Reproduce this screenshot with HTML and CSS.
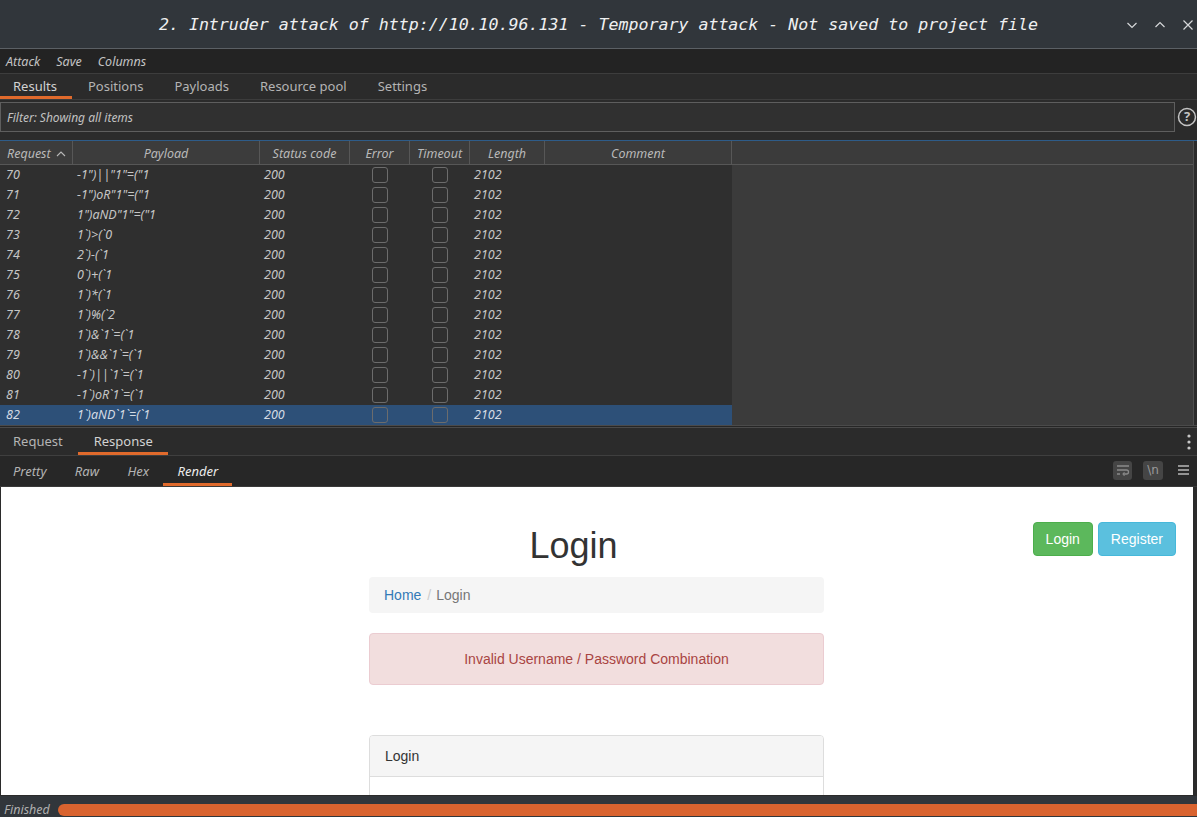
FILE: index.html
```html
<!DOCTYPE html>
<html>
<head>
<meta charset="utf-8">
<link rel="stylesheet" href="styles.css">
</head>
<body>
<div class="app">
  <header class="titlebar">
    <div></div>
    <div class="title">2. Intruder attack of http://10.10.96.131 - Temporary attack - Not saved to project file</div>
    <div class="winbtns">
      <svg width="12" height="12" viewBox="0 0 12 12"><path d="M1.5 4 L6 8.5 L10.5 4" fill="none" stroke="#d6d8da" stroke-width="1.2"/></svg>
      <svg width="12" height="12" viewBox="0 0 12 12"><path d="M1.5 8 L6 3.5 L10.5 8" fill="none" stroke="#d6d8da" stroke-width="1.2"/></svg>
      <svg width="12" height="12" viewBox="0 0 12 12"><path d="M1.5 1.5 L10.5 10.5 M10.5 1.5 L1.5 10.5" fill="none" stroke="#d6d8da" stroke-width="1.2"/></svg>
    </div>
  </header>

  <nav class="menubar">
    <span>Attack</span><span>Save</span><span>Columns</span>
  </nav>

  <nav class="tabs maintabs">
    <span class="tab active">Results</span>
    <span class="tab">Positions</span>
    <span class="tab">Payloads</span>
    <span class="tab">Resource pool</span>
    <span class="tab">Settings</span>
  </nav>

  <div class="filter-row">
    <div class="filter">Filter: Showing all items</div>
    <svg class="help" width="20" height="20" viewBox="0 0 20 20"><circle cx="10" cy="10" r="8.5" fill="none" stroke="#c4c4c4" stroke-width="1.5"/><text x="10" y="14.5" text-anchor="middle" font-family="Noto Sans, sans-serif" font-size="13" font-weight="bold" fill="#c4c4c4">?</text></svg>
  </div>

  <div class="table-wrap">
    <div class="table">
      <div class="row head">
        <div class="c c-req">Request <svg width="10" height="8" viewBox="0 0 10 8"><path d="M1 6 L5 2 L9 6" fill="none" stroke="#b8b8b8" stroke-width="1.1"/></svg></div>
        <div class="c center">Payload</div>
        <div class="c center">Status code</div>
        <div class="c center">Error</div>
        <div class="c center">Timeout</div>
        <div class="c center">Length</div>
        <div class="c center">Comment</div>
        <div class="c fill"></div>
      </div>
      <div class="row"><div class="c">70</div><div class="c">-1")||"1"=("1</div><div class="c">200</div><div class="c cb"><i></i></div><div class="c cb"><i></i></div><div class="c">2102</div><div class="c"></div><div class="c fill"></div></div>
      <div class="row"><div class="c">71</div><div class="c">-1")oR"1"=("1</div><div class="c">200</div><div class="c cb"><i></i></div><div class="c cb"><i></i></div><div class="c">2102</div><div class="c"></div><div class="c fill"></div></div>
      <div class="row"><div class="c">72</div><div class="c">1")aND"1"=("1</div><div class="c">200</div><div class="c cb"><i></i></div><div class="c cb"><i></i></div><div class="c">2102</div><div class="c"></div><div class="c fill"></div></div>
      <div class="row"><div class="c">73</div><div class="c">1`)&gt;(`0</div><div class="c">200</div><div class="c cb"><i></i></div><div class="c cb"><i></i></div><div class="c">2102</div><div class="c"></div><div class="c fill"></div></div>
      <div class="row"><div class="c">74</div><div class="c">2`)-(`1</div><div class="c">200</div><div class="c cb"><i></i></div><div class="c cb"><i></i></div><div class="c">2102</div><div class="c"></div><div class="c fill"></div></div>
      <div class="row"><div class="c">75</div><div class="c">0`)+(`1</div><div class="c">200</div><div class="c cb"><i></i></div><div class="c cb"><i></i></div><div class="c">2102</div><div class="c"></div><div class="c fill"></div></div>
      <div class="row"><div class="c">76</div><div class="c">1`)*(`1</div><div class="c">200</div><div class="c cb"><i></i></div><div class="c cb"><i></i></div><div class="c">2102</div><div class="c"></div><div class="c fill"></div></div>
      <div class="row"><div class="c">77</div><div class="c">1`)%(`2</div><div class="c">200</div><div class="c cb"><i></i></div><div class="c cb"><i></i></div><div class="c">2102</div><div class="c"></div><div class="c fill"></div></div>
      <div class="row"><div class="c">78</div><div class="c">1`)&amp;`1`=(`1</div><div class="c">200</div><div class="c cb"><i></i></div><div class="c cb"><i></i></div><div class="c">2102</div><div class="c"></div><div class="c fill"></div></div>
      <div class="row"><div class="c">79</div><div class="c">1`)&amp;&amp;`1`=(`1</div><div class="c">200</div><div class="c cb"><i></i></div><div class="c cb"><i></i></div><div class="c">2102</div><div class="c"></div><div class="c fill"></div></div>
      <div class="row"><div class="c">80</div><div class="c">-1`)||`1`=(`1</div><div class="c">200</div><div class="c cb"><i></i></div><div class="c cb"><i></i></div><div class="c">2102</div><div class="c"></div><div class="c fill"></div></div>
      <div class="row"><div class="c">81</div><div class="c">-1`)oR`1`=(`1</div><div class="c">200</div><div class="c cb"><i></i></div><div class="c cb"><i></i></div><div class="c">2102</div><div class="c"></div><div class="c fill"></div></div>
      <div class="row selected"><div class="c">82</div><div class="c">1`)aND`1`=(`1</div><div class="c">200</div><div class="c cb"><i></i></div><div class="c cb"><i></i></div><div class="c">2102</div><div class="c"></div><div class="c fill"></div></div>
    </div>
    <div class="scrollbar"></div>
  </div>

  <div class="splitter"></div>

  <nav class="tabs rrtabs">
    <span class="tab">Request</span>
    <span class="tab active">Response</span>
    <span class="spacer"></span>
    <svg class="kebab" width="4" height="16" viewBox="0 0 4 16"><circle cx="2" cy="2" r="1.6" fill="#c8c8c8"/><circle cx="2" cy="8" r="1.6" fill="#c8c8c8"/><circle cx="2" cy="14" r="1.6" fill="#c8c8c8"/></svg>
  </nav>

  <nav class="tabs subtabs">
    <span class="tab">Pretty</span>
    <span class="tab">Raw</span>
    <span class="tab">Hex</span>
    <span class="tab active">Render</span>
    <span class="spacer"></span>
    <span class="iconbtn"><svg width="14" height="12" viewBox="0 0 14 12"><path d="M1 2 H13 M1 6 H10.5 A2 2 0 0 1 10.5 10 H7.5 M1 10 H4" fill="none" stroke="#8a8a8a" stroke-width="1.3"/><path d="M8.5 8.3 L7 10 L8.5 11.7" fill="none" stroke="#8a8a8a" stroke-width="1.1"/></svg></span>
    <span class="iconbtn nl">\n</span>
    <svg class="burger" width="11" height="10" viewBox="0 0 11 10"><path d="M0 1 H11 M0 5 H11 M0 9 H11" stroke="#b8b8b8" stroke-width="1.4"/></svg>
  </nav>

  <div class="render">
    <div class="page">
      <div class="side"></div>
      <div class="main">
        <h1>Login</h1>
        <ol class="breadcrumb">
          <li><a>Home</a></li>
          <li class="sep">/</li>
          <li class="cur">Login</li>
        </ol>
        <div class="alert">Invalid Username / Password Combination</div>
        <div class="panel">
          <div class="panel-heading">Login</div>
          <div class="panel-body"></div>
        </div>
      </div>
      <div class="side right">
        <span class="btn btn-success">Login</span>
        <span class="btn btn-info">Register</span>
      </div>
    </div>
  </div>

  <footer class="status">
    <span class="status-text">Finished</span>
    <div class="progress"></div>
  </footer>
</div>
</body>
</html>
```

FILE: styles.css
```css
* { box-sizing: border-box; }

html, body {
  margin: 0;
  padding: 0;
  background: #2b2b2b;
}

body {
  width: 1197px;
  height: 817px;
  overflow: hidden;
  font-family: "Noto Sans", "Open Sans", sans-serif;
  color: #c0c0c0;
}

.app {
  display: flex;
  flex-direction: column;
  height: 817px;
}

/* title bar */
.titlebar {
  height: 49px;
  flex: none;
  background: #31363b;
  border-bottom: 1px solid #5b6065;
  display: grid;
  grid-template-columns: 1fr auto 1fr;
  align-items: center;
}

.title {
  font-family: "DejaVu Sans Mono", monospace;
  font-style: italic;
  font-size: 16.6px;
  color: #eff0f1;
  white-space: nowrap;
  padding-top: 1px;
}

.winbtns {
  display: flex;
  justify-content: flex-end;
  gap: 16px;
  padding-right: 3px;
  padding-top: 2px;
}

/* menu bar */
.menubar {
  height: 25px;
  flex: none;
  background: #232323;
  border-bottom: 1px solid #3d3d3d;
  display: flex;
  align-items: center;
  gap: 16px;
  padding-left: 6px;
  font-size: 12.5px;
  font-style: italic;
  color: #c4c4c4;
}

/* tabs */
.tabs {
  display: flex;
  align-items: stretch;
  flex: none;
  background: #2b2b2b;
  font-size: 13px;
  color: #b4b4b4;
}

.tab {
  display: flex;
  align-items: center;
  padding: 0 15.5px 0 15.5px;
  border-bottom: 3px solid transparent;
  padding-top: 2px;
}

.tab:first-child { padding-left: 13px; }

.tab.active {
  border-bottom-color: #e06a2c;
  color: #d2d2d2;
}

.maintabs {
  height: 26px;
  border-bottom: 1px solid #3c3c3c;
}

.spacer { flex: 1; }

/* filter */
.filter-row {
  height: 40px;
  flex: none;
  display: flex;
  align-items: flex-start;
  padding-top: 2px;
  background: #2b2b2b;
}

.filter {
  width: 1176px;
  height: 30px;
  border: 1px solid #5e5e5e;
  background: #303030;
  font-size: 12px;
  font-style: italic;
  color: #c2c2c2;
  display: flex;
  align-items: center;
  padding-left: 6px;
}

.help {
  margin-left: 2px;
  margin-top: 5px;
}

/* table */
.table-wrap {
  height: 285px;
  flex: none;
  display: flex;
  border-top: 1px solid #2e5c89;
}

.table {
  flex: 1;
  display: flex;
  flex-direction: column;
}

.row {
  display: grid;
  grid-template-columns: 73px 187px 90px 60px 60px 75px 187px 1fr;
  height: 20px;
  font-size: 12.5px;
  font-style: italic;
  color: #c6c6c6;
  background: #2f2f2f;
}

.row .c {
  display: flex;
  align-items: center;
  padding-left: 4px;
  padding-bottom: 1px;
  white-space: nowrap;
  overflow: hidden;
}

.row .c:first-child { padding-left: 6px; }

.row .fill { background: #3b3b3b; }

.row.selected { background: #2d5078; color: #d4dbe4; }

.row.head {
  height: 24px;
  background: #3c3c3c;
  color: #b9b9b9;
}

.row.head .c {
  border-right: 1px solid #575757;
  border-bottom: 1px solid #575757;
  padding-top: 2px;
  padding-bottom: 0;
}

.row.head .c.fill { border-right: none; }

.row.head .c-req { padding-left: 7px; gap: 5px; }

.row .center { justify-content: center; padding-left: 0; }

.row .cb { justify-content: center; padding-left: 0; padding-bottom: 0; }

.cb i {
  display: block;
  width: 16px;
  height: 16px;
  border: 1px solid #6c6c6c;
  border-radius: 3px;
}

.scrollbar {
  width: 4px;
  background: #2b2b2b;
  border-left: 1px solid #4e4e4e;
}

.splitter {
  height: 3px;
  flex: none;
  border-top: 1px solid #4a4a4a;
  border-bottom: 1px solid #4a4a4a;
  background: #262626;
}

.rrtabs {
  height: 28px;
  border-bottom: 1px solid #3f3f3f;
}

.rrtabs .tab { padding-top: 2px; }

.kebab {
  align-self: center;
  margin-right: 6px;
}

.subtabs {
  height: 31px;
  background: #272727;
  font-style: italic;
  border-bottom: 1px solid #3a3a3a;
  align-items: stretch;
}

.subtabs .tab {
  padding-left: 14.2px;
  padding-right: 14.2px;
  padding-top: 3px;
}

.subtabs .tab:first-child { padding-left: 13px; }

.subtabs .tab.active { color: #ececec; }

.iconbtn {
  align-self: center;
  width: 19px;
  height: 19px;
  border-radius: 3px;
  background: #454545;
  display: flex;
  align-items: center;
  justify-content: center;
  margin-right: 11px;
  margin-top: -2px;
}

.iconbtn.nl {
  width: 20px;
  font-style: normal;
  font-size: 12px;
  color: #9a9a9a;
  font-family: "DejaVu Sans", sans-serif;
  margin-right: 15px;
}

.burger {
  align-self: center;
  margin-right: 8px;
  margin-top: -3px;
}

/* render area */
.render {
  flex: 1;
  min-height: 0;
  padding: 0 4px 1px 1px;
  background: #2b2b2b;
}

.page {
  height: 100%;
  background: #ffffff;
  overflow: hidden;
  display: grid;
  grid-template-columns: 368px 455px 1fr;
  font-family: "Liberation Sans", Arial, sans-serif;
  font-size: 14px;
  line-height: 20px;
  color: #333333;
}

.side.right {
  display: flex;
  justify-content: flex-end;
  align-items: flex-start;
  gap: 5px;
  padding-right: 17px;
  padding-top: 35px;
}

.btn {
  display: inline-block;
  padding: 6px 12px;
  border: 1px solid transparent;
  border-radius: 4px;
  color: #ffffff;
  line-height: 20px;
}

.btn-success { background: #5cb85c; border-color: #4cae4c; }
.btn-info { background: #5bc0de; border-color: #46b8da; }

.main h1 {
  margin: 39px 0 11px;
  padding-right: 46px;
  text-align: center;
  font-size: 36px;
  font-weight: normal;
  line-height: 1.1;
  color: #333333;
}

.breadcrumb {
  list-style: none;
  margin: 0 0 20px;
  padding: 8px 15px;
  background: #f5f5f5;
  border-radius: 4px;
  display: flex;
}

.breadcrumb a { color: #337ab7; }
.breadcrumb .sep { color: #cccccc; padding: 0 5px 0 6px; }
.breadcrumb .cur { color: #777777; }

.alert {
  padding: 15px;
  border: 1px solid #ebccd1;
  border-radius: 4px;
  background: #f2dede;
  color: #a94442;
  text-align: center;
  margin-bottom: 50px;
}

.panel {
  border: 1px solid #dddddd;
  border-radius: 4px;
}

.panel-heading {
  padding: 10px 15px;
  background: #f5f5f5;
  border-bottom: 1px solid #dddddd;
  border-radius: 3px 3px 0 0;
}

.panel-body { height: 60px; }

/* status bar */
.status {
  height: 21px;
  flex: none;
  background: #31363b;
  display: flex;
  align-items: center;
  gap: 8px;
  padding-left: 4px;
}

.status-text {
  font-size: 12.5px;
  font-style: italic;
  color: #b0b0b0;
  padding-top: 6px;
}

.progress {
  flex: 1;
  height: 12px;
  margin-top: 7px;
  background: #d9632f;
  border-radius: 6px 0 0 6px;
}
```
